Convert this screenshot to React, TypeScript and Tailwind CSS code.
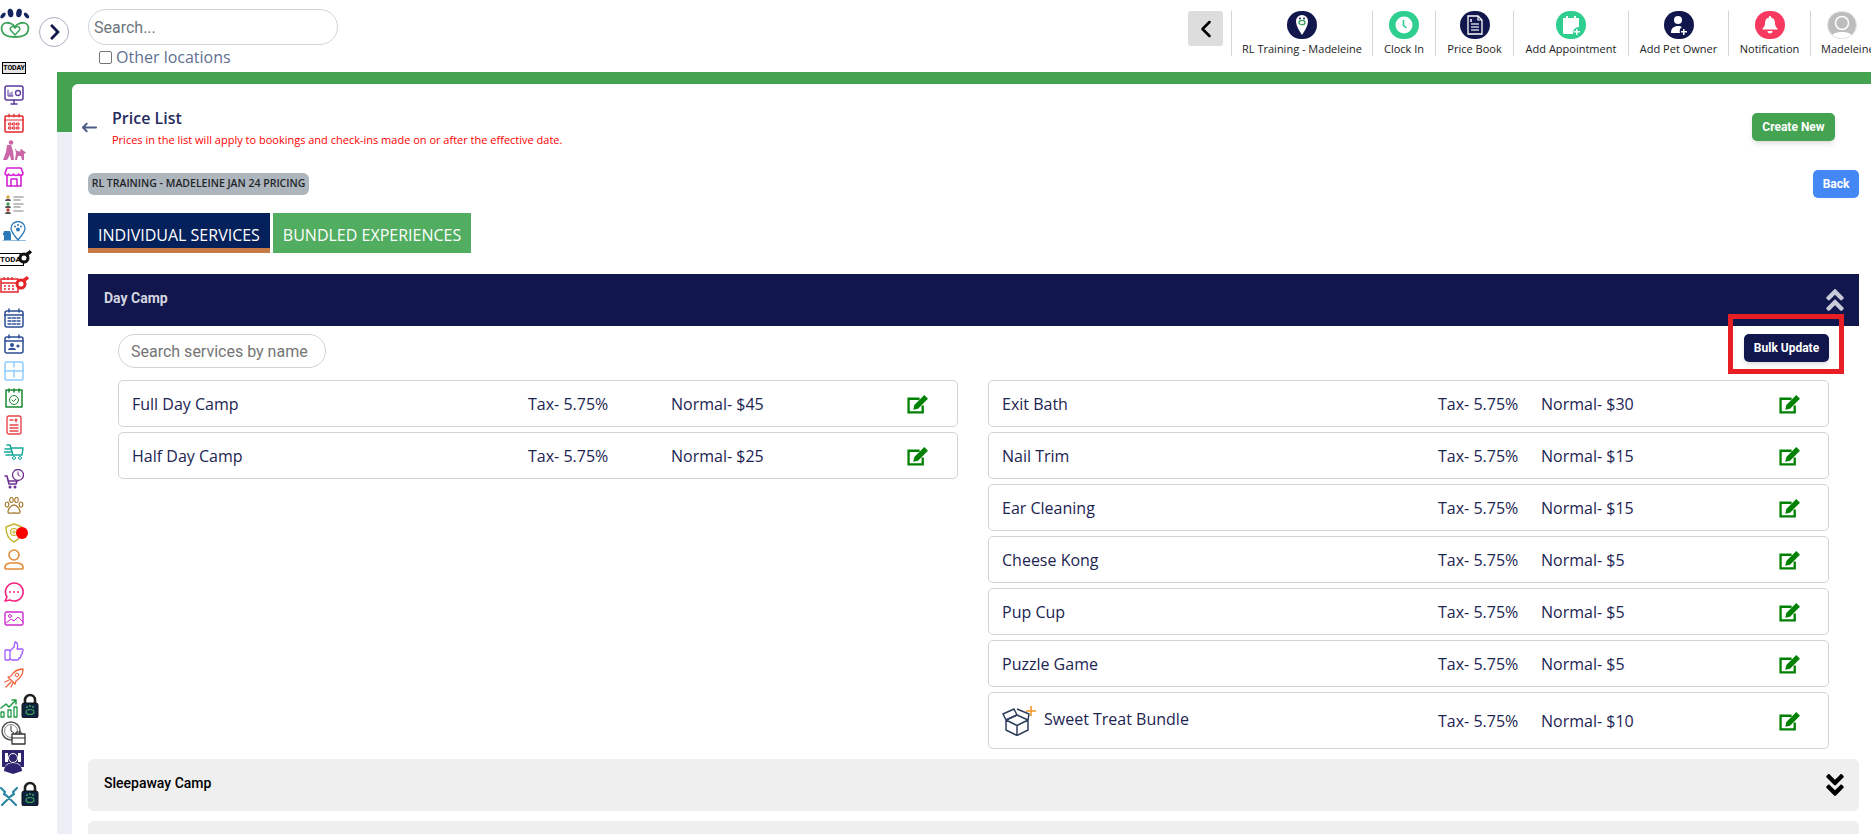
import { ReactNode } from "react";
import { FaAngleDoubleDown, FaAngleDoubleUp, FaChevronRight } from "react-icons/fa";
import { FaArrowLeftLong } from "react-icons/fa6";
import { ChevronLeft } from "lucide-react";

const openSans = "font-['Open_Sans',sans-serif]";
const roboto = "font-['Roboto',sans-serif]";

const Svg = ({ w = 20, h = 20, children }: { w?: number; h?: number; children: ReactNode }) => (
  <svg width={w} height={h} viewBox={`0 0 ${w} ${h}`} fill="none" strokeLinecap="round" strokeLinejoin="round">
    {children}
  </svg>
);

function Logo() {
  return (
    <svg width="30" height="30" viewBox="0 0 30 30" fill="none">
      <ellipse cx="3" cy="7.500" rx="1.800" ry="3.400" fill="#11255f" transform="rotate(40 3 7.500)" />
      <ellipse cx="10.500" cy="5" rx="2.800" ry="4.200" fill="#11255f" transform="rotate(-10 10.500 5)" />
      <ellipse cx="19" cy="5" rx="2.800" ry="4.200" fill="#11255f" transform="rotate(10 19 5)" />
      <ellipse cx="26.500" cy="7.500" rx="1.800" ry="3.400" fill="#11255f" transform="rotate(-40 26.500 7.500)" />
      <path d="M15 19c-2-3-6-5-9.500-4C2 16 1 19 2 23c1 4 6 6 13 6s12-2 13-6c1-4 0-7-3.500-8-3.500-1-7.500 1-9.500 4Z" stroke="#3da35a" strokeWidth="1.800" />
      <path d="M15 27l-4.500-5c-1.500-2.500 2.500-5 4.500-2 2-3 6-.5 4.500 2L15 27Z" stroke="#3da35a" strokeWidth="1.500" />
    </svg>
  );
}

function Lock() {
  return (
    <svg width="18" height="25" viewBox="0 0 18 25" fill="none">
      <path d="M4 11V7a5 5 0 0 1 10 0v4" stroke="#222" strokeWidth="2.600" />
      <rect x="1" y="10" width="16" height="15" rx="2" fill="#0d2340" stroke="#111" />
      <circle cx="6" cy="14" r="1" fill="#3da35a" />
      <circle cx="9" cy="13" r="1" fill="#3da35a" />
      <circle cx="12" cy="14" r="1" fill="#3da35a" />
      <ellipse cx="9" cy="19" rx="4" ry="2.500" stroke="#3da35a" strokeWidth="1.200" />
    </svg>
  );
}

function Whistle({ color }: { color: string }) {
  return (
    <svg width="14" height="15" viewBox="0 0 14 15" fill="none">
      <circle cx="6" cy="9" r="4" fill="#fff" stroke={color} strokeWidth="3" />
      <path d="M7 5l5-3.500 1.500 2L9 7z" fill={color} stroke={color} />
    </svg>
  );
}

const sidebar: { cls: string; node: ReactNode }[] = [
  { cls: "mt-[8px] ml-0 h-[30px]", node: <Logo /> },
  {
    cls: "mt-[24px] ml-[2px] h-[12px]",
    node: (
      <div className={`flex h-[12px] w-[24px] items-center justify-center overflow-hidden border border-black bg-[#e6e6e6] text-[7px] font-bold leading-none tracking-tight text-black ${roboto}`}>
        TODAY
      </div>
    ),
  },
  {
    cls: "mt-[11px] ml-[4px] h-[20px]",
    node: (
      <Svg>
        <rect x="1" y="1" width="18" height="14" rx="2" stroke="#5b3a9e" strokeWidth="1.500" />
        <path d="M4 5v6h5M6 11V8M8 11V7" stroke="#5b3a9e" />
        <circle cx="14" cy="8" r="2.500" stroke="#5b3a9e" strokeWidth="1.300" />
        <path d="M10 15v4M7 19h6" stroke="#5b3a9e" strokeWidth="1.500" />
      </Svg>
    ),
  },
  {
    cls: "mt-[8px] ml-[4px] h-[20px]",
    node: (
      <Svg>
        <rect x="1" y="3" width="18" height="16" rx="1" stroke="#e3262c" strokeWidth="1.500" />
        <path d="M1 7h18M5 1v3M10 1v3M15 1v3" stroke="#e3262c" strokeWidth="1.200" />
        <path d="M5 10h2v2H5zM9 10h2v2H9zM13 10h2v2h-2zM5 14h2v2H5zM9 14h2v2H9zM13 14h2v2h-2z" stroke="#e3262c" />
      </Svg>
    ),
  },
  {
    cls: "mt-[7px] ml-[2px] h-[21px]",
    node: (
      <svg width="24" height="21" viewBox="0 0 24 21" fill="#c866a8">
        <circle cx="9" cy="2.500" r="2.300" />
        <path d="M5 5h4l2 6 1 9H9l-1-5-3 5H1l3-8z" />
        <path d="M13 8l2 3 3 .5 1-3 2 2 3 2-2 1.500V20h-2l-1-4h-3l-1 4h-2l1-7z" />
      </svg>
    ),
  },
  {
    cls: "mt-[6px] ml-[4px] h-[20px]",
    node: (
      <Svg>
        <path d="M3 8v11h14V8M1 6l2-5h14l2 5c0 3-4 3-4.500 1-.5 2-4.500 2-5 0-.5 2-4.500 2-5 0C4.500 9 1 9 1 6Z" stroke="#d41fd4" strokeWidth="1.600" />
        <path d="M7 19v-7h6v7" stroke="#d41fd4" strokeWidth="1.500" />
      </Svg>
    ),
  },
  {
    cls: "mt-[7px] ml-[4px] h-[20px]",
    node: (
      <Svg>
        <circle cx="4" cy="3" r="1.700" fill="#d9a441" />
        <path d="M1 7c0-3 6-3 6 0z" fill="#555" />
        <circle cx="4" cy="10" r="1.700" fill="#3d9a5a" />
        <path d="M1 14c0-3 6-3 6 0z" fill="#555" />
        <circle cx="4" cy="16" r="1.700" fill="#c0452e" />
        <path d="M1 20c0-3 6-3 6 0z" fill="#555" />
        <path d="M10 3h9M10 6h6M10 10h9M10 13h6M10 17h9" stroke="#aaa" strokeWidth="1.600" />
      </Svg>
    ),
  },
  {
    cls: "mt-[7px] ml-[2px] h-[20px]",
    node: (
      <Svg w={24}>
        <path d="M16 19c-4-5-7-8-7-11.500a7 7 0 0 1 14 0C23 11 20 14 16 19Z" fill="#fff" stroke="#2b79b8" strokeWidth="1.300" />
        <circle cx="16" cy="8.500" r="2" fill="#2b79b8" />
        <circle cx="13" cy="5.500" r="1" fill="#2b79b8" />
        <circle cx="16" cy="4" r="1" fill="#2b79b8" />
        <circle cx="19" cy="5.500" r="1" fill="#2b79b8" />
        <path d="M1 13l1-3h6l1 3v1H1zM2 14v5h7v-5" fill="#2b79b8" />
        <path d="M1 20h23" stroke="#2b79b8" />
      </Svg>
    ),
  },
  {
    cls: "mt-[8px] ml-0 h-[18px]",
    node: (
      <div className="flex items-start">
        <div className={`mt-[4px] h-[13px] w-[24px] overflow-hidden border-y border-r border-black text-[8px] font-bold leading-[11px] text-black ${roboto}`}>
          TODA
        </div>
        <div className="-ml-[6px]">
          <Whistle color="#111" />
        </div>
      </div>
    ),
  },
  {
    cls: "mt-[9px] ml-0 h-[18px]",
    node: (
      <div className="flex items-start">
        <svg width="20" height="18" viewBox="0 0 20 18" fill="none">
          <rect x="1" y="3" width="17" height="13" stroke="#e3262c" strokeWidth="1.500" />
          <path d="M1 7h17M4 1v3M8 1v3M12 1v3M4 10h2M8 10h2M12 10h2M4 13h2M8 13h2M12 13h2" stroke="#e3262c" strokeWidth="1.300" />
        </svg>
        <div className="-ml-[5px] -mt-[1px]">
          <Whistle color="#e3262c" />
        </div>
      </div>
    ),
  },
  {
    cls: "mt-[14px] ml-[4px] h-[20px]",
    node: (
      <Svg>
        <rect x="1" y="3" width="18" height="16" rx="2" stroke="#2c4f96" strokeWidth="1.500" />
        <path d="M1 7h18M5 1v3M15 1v3" stroke="#2c4f96" strokeWidth="1.500" />
        <path d="M4 10h3M8.500 10h3M13 10h3M4 13h3M8.500 13h3M13 13h3M4 16h3M8.500 16h3M13 16h3" stroke="#2c4f96" strokeWidth="1.300" />
      </Svg>
    ),
  },
  {
    cls: "mt-[6px] ml-[4px] h-[20px]",
    node: (
      <Svg>
        <rect x="1" y="3" width="18" height="16" rx="2" stroke="#2c4f96" strokeWidth="1.500" />
        <path d="M1 7h18M5 1v3M15 1v3" stroke="#2c4f96" strokeWidth="1.500" />
        <circle cx="8" cy="11" r="2" fill="#2c4f96" />
        <path d="M4 16c0-3 8-3 8 0z" fill="#2c4f96" />
        <circle cx="14" cy="12" r="1.600" fill="#2c4f96" />
      </Svg>
    ),
  },
  {
    cls: "mt-[7px] ml-[4px] h-[20px]",
    node: (
      <Svg>
        <rect x="1" y="1" width="18" height="18" rx="1.500" stroke="#8ecbff" strokeWidth="1.500" />
        <path d="M10 1v5M10 9v7M1 10h18" stroke="#8ecbff" strokeWidth="1.500" />
      </Svg>
    ),
  },
  {
    cls: "mt-[7px] ml-[5px] h-[20px]",
    node: (
      <Svg w={18}>
        <rect x="1" y="2" width="16" height="17" stroke="#1b8a35" strokeWidth="1.500" />
        <path d="M4 1v3M9 1v3M14 1v3" stroke="#1b8a35" strokeWidth="1.500" />
        <circle cx="9" cy="12" r="4.500" stroke="#1b8a35" />
        <path d="M7 12l1.500 1.500L11 11" stroke="#1b8a35" />
      </Svg>
    ),
  },
  {
    cls: "mt-[7px] ml-[6px] h-[20px]",
    node: (
      <Svg w={16}>
        <rect x="1" y="1" width="14" height="18" rx="2" stroke="#e8454a" strokeWidth="1.400" />
        <path d="M4 5h3M10 4v3M9 5h2M4 10h8M4 13h8M4 16h8" stroke="#e8454a" strokeWidth="1.300" />
      </Svg>
    ),
  },
  {
    cls: "mt-[9px] ml-[4px] h-[16px]",
    node: (
      <Svg h={16}>
        <path d="M3 1h3l3 10h9l1-7H7M1 5h5M0 8h7M2 11h6" stroke="#17a89a" strokeWidth="1.500" />
        <circle cx="10" cy="14" r="1.500" stroke="#17a89a" />
        <circle cx="16" cy="14" r="1.500" stroke="#17a89a" />
      </Svg>
    ),
  },
  {
    cls: "mt-[9px] ml-[4px] h-[20px]",
    node: (
      <Svg>
        <circle cx="14" cy="6" r="5.500" stroke="#6d2f8f" strokeWidth="1.300" />
        <path d="M14 3v3l2 1" stroke="#6d2f8f" />
        <path d="M1 7h2l2 8h7l1-3H4" stroke="#6d2f8f" strokeWidth="1.600" />
        <circle cx="6" cy="18" r="1.500" fill="#6d2f8f" />
        <circle cx="11" cy="18" r="1.500" fill="#6d2f8f" />
      </Svg>
    ),
  },
  {
    cls: "mt-[8px] ml-[4px] h-[17px]",
    node: (
      <Svg h={17}>
        <ellipse cx="3" cy="7.500" rx="1.800" ry="2.500" stroke="#a97d35" strokeWidth="1.200" />
        <ellipse cx="7.500" cy="3" rx="1.800" ry="2.500" stroke="#a97d35" strokeWidth="1.200" />
        <ellipse cx="12.500" cy="3" rx="1.800" ry="2.500" stroke="#a97d35" strokeWidth="1.200" />
        <ellipse cx="17" cy="7.500" rx="1.800" ry="2.500" stroke="#a97d35" strokeWidth="1.200" />
        <path d="M10 8c-3 0-6 4-6 7 0 2 3 1 6 1s6 1 6-1c0-3-3-7-6-7Z" stroke="#a97d35" strokeWidth="1.300" />
      </Svg>
    ),
  },
  {
    cls: "mt-[9px] ml-[5px] h-[20px] relative",
    node: (
      <>
        <Svg w={18}>
          <path d="M9 1l8 3c0 7-2 12-8 15C3 16 1 11 1 4z" stroke="#c5b431" strokeWidth="1.400" />
          <circle cx="9" cy="9" r="3.500" stroke="#c5b431" strokeWidth="1.200" />
          <path d="M7 9h4M9 7v4" stroke="#c5b431" />
        </Svg>
        <span className="absolute left-[11px] top-[4px] h-[12px] w-[12px] rounded-full bg-[#ff0000]" />
      </>
    ),
  },
  {
    cls: "mt-[6px] ml-[4px] h-[21px]",
    node: (
      <Svg h={21}>
        <circle cx="10" cy="6" r="5" stroke="#e58a34" strokeWidth="1.600" />
        <path d="M2 20c-2 0-1-4 1-5 2-1 3-1 4-1h6c1 0 2 0 4 1 2 1 3 5 1 5z" stroke="#e58a34" strokeWidth="1.600" />
      </Svg>
    ),
  },
  {
    cls: "mt-[12px] ml-[4px] h-[20px]",
    node: (
      <Svg>
        <path d="M10 1a9 9 0 1 1-4 17l-5 1 2-4A9 9 0 0 1 10 1Z" stroke="#f5237f" strokeWidth="1.600" />
        <circle cx="6" cy="10" r="1" fill="#f5237f" />
        <circle cx="10" cy="10" r="1" fill="#f5237f" />
        <circle cx="14" cy="10" r="1" fill="#f5237f" />
      </Svg>
    ),
  },
  {
    cls: "mt-[9px] ml-[4px] h-[15px]",
    node: (
      <Svg h={15}>
        <rect x="1" y="1" width="18" height="13" rx="1.500" stroke="#cf2bd0" strokeWidth="1.400" />
        <circle cx="6" cy="5" r="1.500" stroke="#cf2bd0" />
        <path d="M2 12l5-4 3 2 4-4 5 5" stroke="#cf2bd0" />
      </Svg>
    ),
  },
  {
    cls: "mt-[15px] ml-[4px] h-[20px]",
    node: (
      <Svg>
        <rect x="1" y="9" width="5" height="10" rx="1" stroke="#a25bff" strokeWidth="1.300" />
        <path d="M6 10l4-4 1-5c3 0 3 4 2 7h5c2 0 1 3 0 3 1 1 0 3-1 3 0 2-1 3-2 3 0 1-1 2-2 2H8l-2-1" stroke="#a25bff" strokeWidth="1.300" />
      </Svg>
    ),
  },
  {
    cls: "mt-[7px] ml-[4px] h-[20px]",
    node: (
      <Svg>
        <path d="M19 1c-5 0-9 2-12 7l-3 1 7 7 1-3c5-3 7-7 7-12Z" stroke="#f0623a" strokeWidth="1.300" />
        <circle cx="13" cy="7" r="1.800" stroke="#f0623a" />
        <path d="M5 12l-4 2M7 14l-5 5M9 15l-2 4" stroke="#f0623a" strokeWidth="1.300" />
      </Svg>
    ),
  },
  {
    cls: "mt-[5px] ml-0 h-[25px]",
    node: (
      <div className="flex items-end gap-[3px]">
        <Svg w={18} h={21}>
          <path d="M1 11l5-4 3 3 6-6M12 3h4v4" stroke="#1f9d46" strokeWidth="1.500" />
          <path d="M1 15h3v5H1zM8 13h3v7H8zM14 10h3v10h-3z" stroke="#1f9d46" strokeWidth="1.300" />
        </Svg>
        <Lock />
      </div>
    ),
  },
  {
    cls: "mt-[3px] ml-[1px] h-[24px]",
    node: (
      <Svg w={25} h={24}>
        <circle cx="10" cy="10" r="9" stroke="#555" strokeWidth="1.500" />
        <circle cx="10" cy="10" r="6.500" stroke="#888" />
        <path d="M10 5v5l3 2" stroke="#333" />
        <rect x="11" y="13" width="13" height="10" fill="#fff" stroke="#333" strokeWidth="1.300" />
        <path d="M15 13v-2h5v2M11 17h13" stroke="#333" />
      </Svg>
    ),
  },
  {
    cls: "mt-[5px] ml-[2px] h-[24px]",
    node: (
      <svg width="22" height="24" viewBox="0 0 22 24" fill="#2d2570">
        <path d="M0 0h22v17h-3c-1-3-3-4-5-4h-6c-2 0-4 1-5 4H0z" />
        <path d="M3 3h3v9H3zM16 3h3v9h-3z" fill="#fff" />
        <circle cx="11" cy="8" r="4.500" stroke="#fff" />
        <path d="M2 21c0-5 4-8 9-8s9 3 9 8l-9 3z" />
      </svg>
    ),
  },
  {
    cls: "mt-[7px] ml-0 h-[25px]",
    node: (
      <div className="flex items-end gap-[3px]">
        <Svg w={18} h={21}>
          <path d="M1 3l4 4-1 2 3 2 9 9M17 3l-4 4 1 2-3 2-9 9" stroke="#2f86a6" strokeWidth="2.200" />
        </Svg>
        <Lock />
      </div>
    ),
  },
];

const NavCircle = ({ bg, children }: { bg: string; children: ReactNode }) => (
  <div className={`flex h-[30px] w-[30px] items-center justify-center rounded-full ${bg}`}>{children}</div>
);

const navItems: { label: string; width: string; icon: ReactNode }[] = [
  {
    label: "RL Training - Madeleine",
    width: "w-[141px]",
    icon: (
      <NavCircle bg="bg-[#11174d]">
        <svg width="14" height="22" viewBox="0 0 14 22">
          <path d="M7 21C3 15 1 11 1 7a6 6 0 0 1 12 0c0 4-2 8-6 14Z" fill="#fff" />
          <circle cx="5" cy="4.500" r="1" fill="#11255f" />
          <circle cx="9" cy="4.500" r="1" fill="#11255f" />
          <ellipse cx="7" cy="8.500" rx="3" ry="2.200" fill="none" stroke="#3da35a" strokeWidth="1.300" />
        </svg>
      </NavCircle>
    ),
  },
  {
    label: "Clock In",
    width: "w-[63px]",
    icon: (
      <NavCircle bg="bg-[#2ecf8e]">
        <svg width="18" height="18" viewBox="0 0 18 18" fill="none">
          <circle cx="9" cy="9" r="8.500" fill="#fff" />
          <path d="M8.500 4.500v5l2.500 2" stroke="#2ecf8e" strokeWidth="1.600" strokeLinecap="round" />
        </svg>
      </NavCircle>
    ),
  },
  {
    label: "Price Book",
    width: "w-[78px]",
    icon: (
      <NavCircle bg="bg-[#11174d]">
        <svg width="16" height="20" viewBox="0 0 16 20" fill="none">
          <path d="M1 1h10l4 4v14H1z" stroke="#fff" strokeWidth="1.300" />
          <path d="M11 1v4h4" stroke="#fff" strokeWidth="1.200" />
          <path d="M4 9h8M4 12h8M4 15h8" stroke="#c8cbe0" strokeWidth="1.300" />
          <path d="M4 4v3" stroke="#fff" strokeWidth="1.500" />
        </svg>
      </NavCircle>
    ),
  },
  {
    label: "Add Appointment",
    width: "w-[115px]",
    icon: (
      <NavCircle bg="bg-[#2ecf8e]">
        <svg width="20" height="20" viewBox="0 0 20 20" fill="#fff">
          <path d="M2 3h3V1h2v2h6V1h2v2h3v9a6 6 0 0 0-6 7H3a1 1 0 0 1-1-1z" />
          <path d="M15 14h1.500v2H19v1.500h-2.500V20H15v-2.500h-2V16h2z" />
        </svg>
      </NavCircle>
    ),
  },
  {
    label: "Add Pet Owner",
    width: "w-[100px]",
    icon: (
      <NavCircle bg="bg-[#11174d]">
        <svg width="18" height="20" viewBox="0 0 18 20" fill="#fff">
          <circle cx="8" cy="5" r="4" />
          <path d="M1 18c0-5 3-7 7-7 2 0 3 .5 4 1-2 1-3 4-2 6z" />
          <path d="M13 14h1.500v2H17v1.500h-2.500V20H13v-2.500h-2V16h2z" />
        </svg>
      </NavCircle>
    ),
  },
  {
    label: "Notification",
    width: "w-[82px]",
    icon: (
      <NavCircle bg="bg-[#f7385f]">
        <svg width="16" height="18" viewBox="0 0 16 18" fill="#fff">
          <path d="M8 0a1 1 0 0 1 1 1.500c3 .5 4 3 4 5.500 0 3 1 4 2.500 5.500v1H.5v-1C2 11 3 10 3 7c0-2.500 1-5 4-5.500A1 1 0 0 1 8 0Z" />
          <path d="M5.500 15h5a2.500 2.500 0 0 1-5 0Z" />
        </svg>
      </NavCircle>
    ),
  },
];

const leftRows = [
  { name: "Full Day Camp", price: "$45" },
  { name: "Half Day Camp", price: "$25" },
];

const rightRows = [
  { name: "Exit Bath", price: "$30" },
  { name: "Nail Trim", price: "$15" },
  { name: "Ear Cleaning", price: "$15" },
  { name: "Cheese Kong", price: "$5" },
  { name: "Pup Cup", price: "$5" },
  { name: "Puzzle Game", price: "$5" },
];

function EditIcon() {
  return (
    <svg width="22" height="20" viewBox="0 0 21 19" fill="none">
      <path d="M15 11v6.500H1.500V4.500H12" stroke="#008000" strokeWidth="2.200" />
      <path d="M7 10.500L16.500 1l3.500 3.500L10.500 14 6 15z" fill="#008000" />
    </svg>
  );
}

function BundleIcon() {
  return (
    <svg width="34" height="30" viewBox="0 0 34 30" fill="none">
      <path d="M15 9l11 5v10l-11 5.500L4 24V14zM4 14l11 5.500L26 14M15 19.500v10" stroke="#2f3e5c" strokeWidth="1.500" strokeLinejoin="round" />
      <path d="M4 14L1 8l11-5 3 6-11 5ZM26 14l1-6-12-5" stroke="#2f3e5c" strokeWidth="1.500" strokeLinejoin="round" />
      <path d="M29 0v10M24 5h10" stroke="#f7931e" strokeWidth="1.500" />
    </svg>
  );
}

function Row({ name, price, side }: { name: ReactNode; price: string; side: "left" | "right" }) {
  return (
    <div className={`flex h-[47px] items-center rounded-[5px] border border-[#ced4da] pl-[13px] text-[16px] text-[#1c2452] ${openSans}`}>
      <div className={side === "left" ? "w-[396px]" : "w-[436px]"}>{name}</div>
      <div className={side === "left" ? "w-[143px]" : "w-[103px]"}>Tax- 5.75%</div>
      <div className={side === "left" ? "w-[236px]" : "w-[238px]"}>Normal- {price}</div>
      <EditIcon />
    </div>
  );
}

function BundleRow() {
  return (
    <div className={`flex h-[57px] items-center rounded-[5px] border border-[#ced4da] pl-[13px] text-[16px] text-[#1c2452] ${openSans}`}>
      <div className="flex w-[436px] items-center gap-[8px]">
        <BundleIcon />
        <span className="-mt-[4px]">Sweet Treat Bundle</span>
      </div>
      <div className="w-[103px]">Tax- 5.75%</div>
      <div className="w-[238px]">Normal- $10</div>
      <EditIcon />
    </div>
  );
}

export default function App() {
  return (
    <div className="relative flex h-[834px] w-[1871px] overflow-hidden bg-white">
      <aside className="flex w-[57px] shrink-0 flex-col bg-white">
        {sidebar.map((item, i) => (
          <div key={i} className={item.cls}>
            {item.node}
          </div>
        ))}
      </aside>

      {/* toggle sits on the sidebar edge */}
      <button className="absolute left-[39px] top-[17px] flex h-[30px] w-[30px] items-center justify-center rounded-full border border-[#a9adc6] bg-white text-[#11174d]">
        <FaChevronRight className="ml-[1px] text-[18px]" />
      </button>

      <div className="flex min-w-0 flex-1 flex-col">
        <header className="flex h-[72px] shrink-0 justify-between bg-white">
          <div className="ml-[31px] pt-[9px]">
            <input
              readOnly
              placeholder="Search..."
              className={`block h-[36px] w-[250px] rounded-full border border-[#ced4da] px-[5px] text-[16px] outline-none placeholder:text-[#6c757d] ${roboto}`}
            />
            <label className={`ml-[11px] mt-[1px] flex items-center gap-[4px] text-[16px] leading-[22px] text-[#5f7191] ${openSans}`}>
              <span className="h-[13px] w-[13px] rounded-[2px] border border-[#767676] bg-white" />
              Other locations
            </label>
          </div>

          <nav className="flex pt-[11px]">
            <button className="mr-[8px] flex h-[35px] w-[35px] items-center justify-center rounded-[3px] bg-[#dddddd] text-black">
              <ChevronLeft size={28} strokeWidth={2.2} />
            </button>
            {navItems.map((n) => (
              <div key={n.label} className={`flex h-[45px] flex-col items-center border-l border-[#d5d5d5] ${n.width}`}>
                {n.icon}
                <span className={`mt-[2px] whitespace-nowrap text-[11px] leading-[15px] text-[#222] ${openSans}`}>{n.label}</span>
              </div>
            ))}
            <div className="flex h-[45px] w-[61px] flex-col items-start overflow-hidden border-l border-[#d5d5d5] pl-[10px]">
              <div className="ml-[6px] h-[30px] w-[30px] overflow-hidden rounded-full border border-[#e5e5e5] bg-[#bdbdbd]">
                <svg width="28" height="28" viewBox="0 0 28 28" fill="#fff">
                  <circle cx="14" cy="11" r="6.500" fill="none" stroke="#fff" strokeWidth="1.500" />
                  <path d="M2 28c0-6 6-8 12-8s12 2 12 8z" />
                </svg>
              </div>
              <span className={`mt-[2px] whitespace-nowrap text-[11px] leading-[15px] text-[#222] ${openSans}`}>Madeleine</span>
            </div>
          </nav>
        </header>

        <main className="flex-1 bg-[linear-gradient(#43a351_60px,#eceff5_60px)] pl-[15px] pt-[12px]">
          <div className="h-full rounded-tl-[6px] bg-white pl-[16px] pr-[12px] pt-[23px]">
            <div className="flex h-[66px] items-start justify-between">
              <div className="flex items-start">
                <FaArrowLeftLong className="-ml-[6px] mr-[15px] mt-[13px] w-[15px] text-[15px] text-[#4a5a85]" />
                <div>
                  <h1 className={`text-[16px] font-semibold leading-[22px] text-[#262b5e] ${openSans}`}>Price List</h1>
                  <p className={`mt-[4px] text-[11px] leading-[14px] text-[#ff0000] ${openSans}`}>
                    Prices in the list will apply to bookings and check-ins made on or after the effective date.
                  </p>
                </div>
              </div>
              <button className={`mr-[24px] mt-[6px] h-[28px] w-[83px] rounded-[5px] bg-[#43a351] text-[12px] font-bold text-white shadow-md ${roboto}`}>
                Create New
              </button>
            </div>

            <div className="flex h-[40px] items-start justify-between">
              <span className={`flex h-[22px] w-[221px] items-center justify-center rounded-[6px] bg-[#adb5bd] text-[10.500px] font-semibold text-[#212529] ${openSans}`}>
                RL TRAINING - MADELEINE JAN 24 PRICING
              </span>
              <button className={`-mt-[3px] h-[28px] w-[46px] rounded-[5px] bg-[#4488f6] text-[12px] font-bold text-white ${roboto}`}>Back</button>
            </div>

            <div className={`flex h-[40px] gap-[3px] text-[16px] text-white ${openSans}`}>
              <div className="flex w-[182px] items-center justify-center border-b-[5px] border-[#c77a45] bg-[#04215b] pt-[9px]">INDIVIDUAL SERVICES</div>
              <div className="flex w-[198px] items-center justify-center bg-[#51ad60] pt-[4px]">BUNDLED EXPERIENCES</div>
            </div>

            <div className={`mt-[21px] flex h-[52px] items-center justify-between bg-[#11174d] pl-[16px] pr-[10px] text-[14px] font-bold text-[#d5d6e0] ${roboto}`}>
              <span className="-mt-[4px]">Day Camp</span>
              <FaAngleDoubleUp className="text-[28px] text-[#c9cbd9]" />
            </div>

            <div className="relative px-[30px] pt-[8px]">
              <div className="flex items-start justify-between">
                <input
                  readOnly
                  placeholder="Search services by name"
                  className={`h-[34px] w-[208px] rounded-full border border-[#ced4da] px-[12px] text-[16px] outline-none placeholder:text-[#757575] ${roboto}`}
                />
                <button className={`h-[28px] w-[85px] rounded-[5px] bg-[#11174d] text-[12px] font-bold text-white shadow-md ${roboto}`}>Bulk Update</button>
              </div>
              <div className="pointer-events-none absolute -top-[12px] right-[15px] h-[60px] w-[116px] border-[5px] border-[#e81e25]" />

              <div className="mt-[12px] grid grid-cols-[840px_841px] gap-x-[30px]">
                <div className="flex flex-col gap-[5px]">
                  {leftRows.map((r) => (
                    <Row key={r.name} name={r.name} price={r.price} side="left" />
                  ))}
                </div>
                <div className="flex flex-col gap-[5px]">
                  {rightRows.map((r) => (
                    <Row key={r.name} name={r.name} price={r.price} side="right" />
                  ))}
                  <BundleRow />
                </div>
              </div>
            </div>

            <div className={`mt-[10px] flex h-[52px] items-center justify-between rounded-[6px] bg-[#efefef] pl-[16px] pr-[10px] text-[14px] font-medium text-black ${roboto}`}>
              <span className="-mt-[4px]">Sleepaway Camp</span>
              <FaAngleDoubleDown className="text-[28px]" />
            </div>
            <div className="mt-[10px] h-[52px] rounded-[6px] bg-[#efefef]" />
          </div>
        </main>
      </div>
    </div>
  );
}
